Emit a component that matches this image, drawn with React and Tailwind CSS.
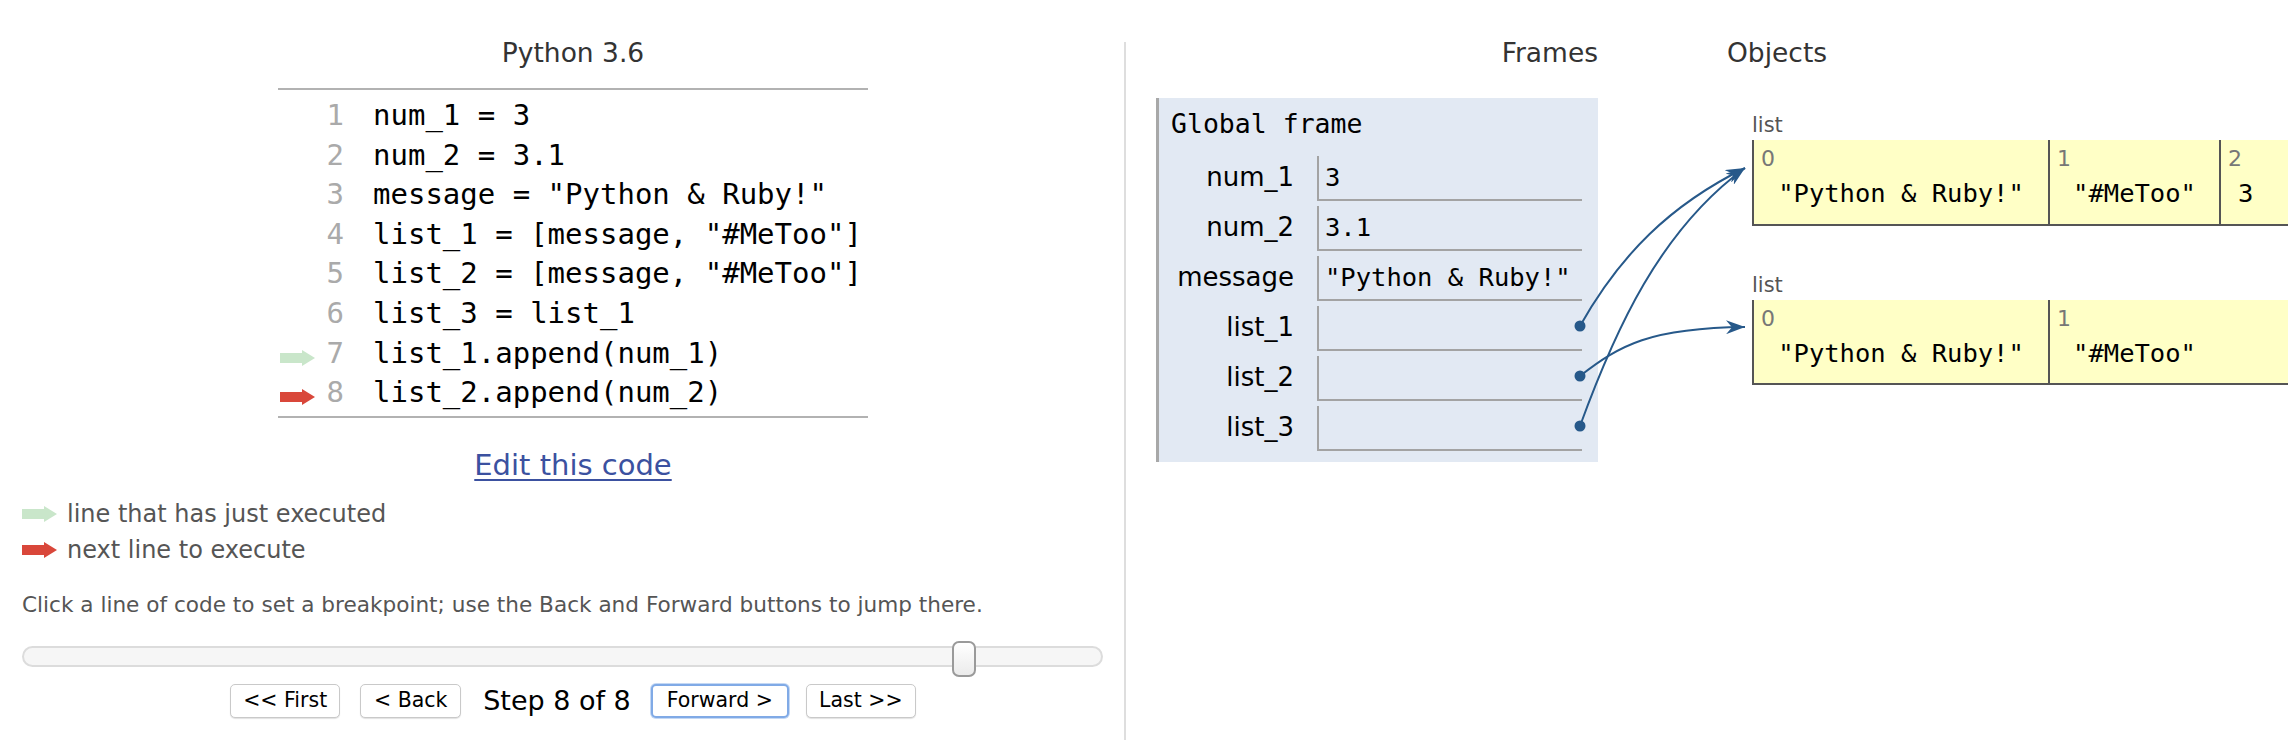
import React from "react";

const SANS = "font-['DejaVu_Sans',sans-serif]";
const MONO = "font-['DejaVu_Sans_Mono',monospace]";

const code = [
  "num_1 = 3",
  "num_2 = 3.1",
  'message = "Python & Ruby!"',
  'list_1 = [message, "#MeToo"]',
  'list_2 = [message, "#MeToo"]',
  "list_3 = list_1",
  "list_1.append(num_1)",
  "list_2.append(num_2)",
];

function Arrow({ color }) {
  return (
    <svg width="35" height="16" viewBox="0 0 35 16" className="block shrink-0">
      <polygon points="0,3 22,3 22,0 35,8 22,16 22,13 0,13" fill={color} />
    </svg>
  );
}

const frameVars = [
  { name: "num_1", value: "3" },
  { name: "num_2", value: "3.1" },
  { name: "message", value: '"Python & Ruby!"' },
  { name: "list_1", value: "" },
  { name: "list_2", value: "" },
  { name: "list_3", value: "" },
];

function ListObj({ items, widths, aligns, height }) {
  return (
    <div className="flex flex-col">
      <div className="text-[21px] leading-[24px] text-[#555]">list</div>
      <div className={`mt-[3px] flex border-l-2 border-b-2 border-[#555] bg-[#ffffc6] ${height}`}>
        {items.map((v, i) => (
          <div
            key={i}
            className={`flex flex-col shrink-0 ${widths[i]} ${i > 0 ? "border-l-2 border-[#555]" : ""}`}
          >
            <div className="pt-[7px] pl-[7px] text-[22px] leading-[24px] text-[#777]">{i}</div>
            <div className={`mt-[5px] ${aligns[i]} text-[25.5px] leading-[34px] text-black whitespace-pre ${MONO}`}>
              {v}
            </div>
          </div>
        ))}
      </div>
    </div>
  );
}

export default function App() {
  return (
    <div className={`relative w-[2288px] h-[740px] overflow-hidden bg-white flex ${SANS}`}>
      {/* Left column */}
      <div className="w-[1124px] shrink-0 flex flex-col">
        <div className="w-[1146px] flex justify-center mt-[37px]">
          <div className="text-[26.5px] leading-[32px] text-[#333]">Python 3.6</div>
        </div>
        <div className="w-[1146px] flex justify-center mt-[19px]">
          <div className="w-[590px] border-t-2 border-b-2 border-[#b2b2b2] pt-[6px] pb-[3px]">
            {code.map((line, i) => (
              <div key={i} className="flex h-[39.6px]">
                <div className="w-[38px] pl-[2px] shrink-0 pt-[16px]">
                  {i === 6 && <Arrow color="#c9e6ca" />}
                  {i === 7 && <Arrow color="#d9473a" />}
                </div>
                <div className={`w-[28px] shrink-0 text-right text-[29px] leading-[39.6px] text-[#aaa] ${MONO}`}>
                  {i + 1}
                </div>
                <div className={`pl-[29px] text-[29px] leading-[39.6px] text-black whitespace-pre ${MONO}`}>
                  {line}
                </div>
              </div>
            ))}
          </div>
        </div>
        <div className="w-[1146px] flex justify-center mt-[30px]">
          <span className="text-[29px] leading-[34px] text-[#3b51a0] underline decoration-2 underline-offset-[4px]">
            Edit this code
          </span>
        </div>
        <div className="pl-[22px] mt-[14px] flex flex-col">
          <div className="flex items-center h-[36px]">
            <Arrow color="#c9e6ca" />
            <span className="ml-[10px] text-[24px] leading-[36px] text-[#555]">line that has just executed</span>
          </div>
          <div className="flex items-center h-[36px]">
            <Arrow color="#d9473a" />
            <span className="ml-[10px] text-[24px] leading-[36px] text-[#555]">next line to execute</span>
          </div>
        </div>
        <div className="pl-[22px] mt-[24px] text-[21.6px] leading-[25px] text-[#555] whitespace-nowrap">
          Click a line of code to set a breakpoint; use the Back and Forward buttons to jump there.
        </div>
        <div className="ml-[22px] mt-[29px] w-[1081px] h-[21px] relative rounded-[11px] border-2 border-[#dcdcdc] bg-[#f6f6f6]">
          <div className="absolute left-[928px] top-[-7px] w-[24px] h-[36px] rounded-[7px] border-2 border-[#9a9a9a] bg-gradient-to-b from-white to-[#ebebeb]" />
        </div>
        <div className="w-[1146px] flex justify-center items-center mt-[17px] h-[34px] text-black">
          <div className="w-[110px] h-[34px] flex items-center justify-center rounded-[5px] border border-[#c9c9c9] bg-white shadow-[0_1px_1px_rgba(0,0,0,0.12)] text-[20.5px]">
            &lt;&lt; First
          </div>
          <div className="ml-[20px] w-[101px] h-[34px] flex items-center justify-center rounded-[5px] border border-[#c9c9c9] bg-white shadow-[0_1px_1px_rgba(0,0,0,0.12)] text-[20.5px]">
            &lt; Back
          </div>
          <div className="ml-[22px] text-[27px] leading-[34px]">Step 8 of 8</div>
          <div className="ml-[20px] w-[138px] h-[34px] flex items-center justify-center rounded-[5px] border-2 border-[#80aae6] bg-white shadow-[0_0_0_1px_#c4d8f4] text-[20.5px]">
            Forward &gt;
          </div>
          <div className="ml-[17px] w-[110px] h-[34px] flex items-center justify-center rounded-[5px] border border-[#c9c9c9] bg-white shadow-[0_1px_1px_rgba(0,0,0,0.12)] text-[20.5px]">
            Last &gt;&gt;
          </div>
        </div>
      </div>

      {/* Divider */}
      <div className="w-[2px] shrink-0 bg-[#dedede] mt-[42px] self-stretch" />

      {/* Right column */}
      <div className="flex-1 flex pl-[30px]">
        {/* Stack */}
        <div className="w-[442px] shrink-0 flex flex-col">
          <div className="mt-[37px] text-right text-[26.5px] leading-[32px] text-[#333]">Frames</div>
          <div className="mt-[29px] border-l-[3px] border-[#a8a8a8] bg-[#e2e9f3] pt-[11px] pb-[11px]">
            <div className={`pl-[12px] text-[26.5px] leading-[30px] text-black ${MONO}`}>Global frame</div>
            <div className="mt-[17px] flex flex-col gap-[5px]">
              {frameVars.map((v) => (
                <div key={v.name} className="flex h-[45px]">
                  <div className="w-[158px] shrink-0 pr-[23px] text-right text-[26px] leading-[43px] text-black">
                    {v.name}
                  </div>
                  <div
                    className={`w-[265px] shrink-0 border-l-2 border-b-2 border-[#a3a3a3] pl-[6px] text-[25.5px] leading-[43px] text-black whitespace-pre ${MONO}`}
                  >
                    {v.value}
                  </div>
                </div>
              ))}
            </div>
          </div>
        </div>

        {/* Heap */}
        <div className="ml-[129px] flex flex-col">
          <div className="mt-[37px] text-[26.5px] leading-[32px] text-[#333]">Objects</div>
          <div className="ml-[25px] mt-[44px]">
            <ListObj
              items={['"Python & Ruby!"', '"#MeToo"', "3"]}
              widths={["w-[294px]", "w-[171px]", "w-[70px]"]}
              aligns={["text-center", "text-center", "text-left pl-[17px]"]}
              height="h-[86px]"
            />
          </div>
          <div className="ml-[25px] mt-[47px]">
            <ListObj
              items={['"Python & Ruby!"', '"#MeToo"']}
              widths={["w-[294px]", "w-[171px]"]}
              aligns={["text-center", "text-center"]}
              height="h-[85px]"
            />
          </div>
        </div>
      </div>

      {/* Pointer arrows overlay */}
      <svg className="absolute left-0 top-0 pointer-events-none" width="2288" height="740" viewBox="0 0 2288 740">
        <defs>
          <marker id="ah" markerUnits="userSpaceOnUse" markerWidth="20" markerHeight="14" refX="19" refY="7" orient="auto">
            <path d="M0,0 L19,7 L0,14 L6,7 Z" fill="#27598a" />
          </marker>
        </defs>
        <g fill="none" stroke="#27598a" strokeWidth="2">
          <path d="M1580,326 C1620,255 1670,205 1745,168" markerEnd="url(#ah)" />
          <path d="M1580,426 C1615,330 1660,230 1745,168" markerEnd="url(#ah)" />
          <path d="M1580,376 C1620,345 1650,328 1745,327" markerEnd="url(#ah)" />
        </g>
        <g fill="#27598a">
          <circle cx="1580" cy="326" r="5.5" />
          <circle cx="1580" cy="376" r="5.5" />
          <circle cx="1580" cy="426" r="5.5" />
        </g>
      </svg>
    </div>
  );
}
